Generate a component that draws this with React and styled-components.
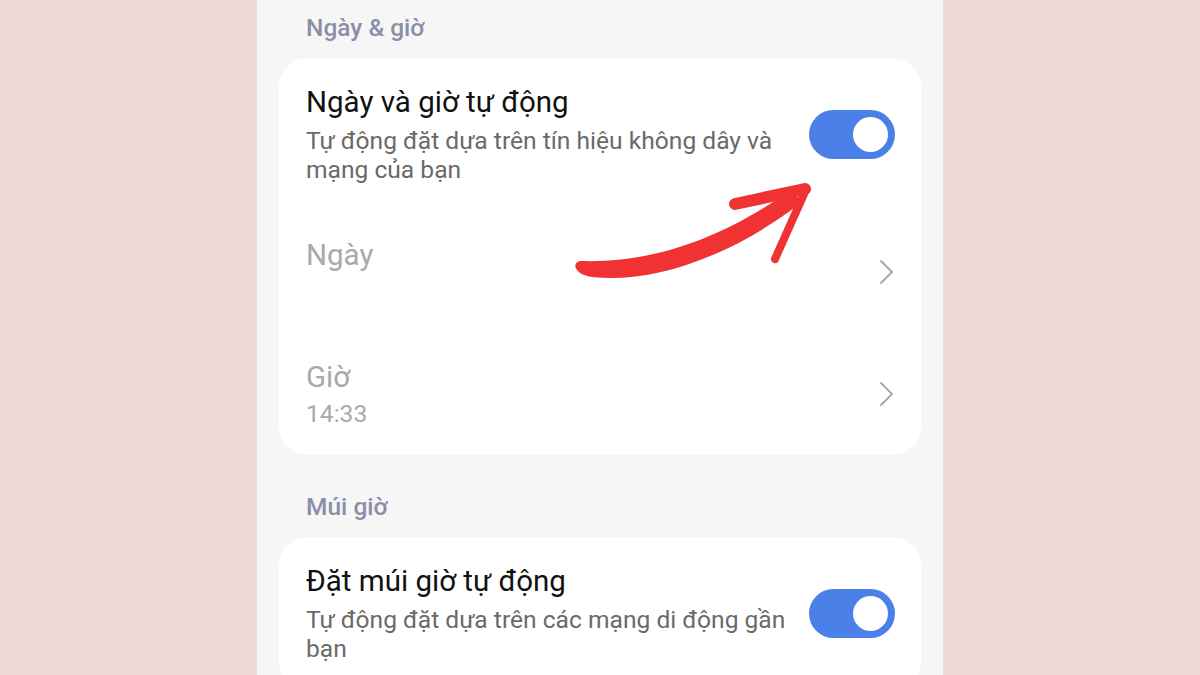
import React from 'react';
import styled, { createGlobalStyle } from 'styled-components';

const GlobalStyle = createGlobalStyle`
  html, body {
    margin: 0;
    padding: 0;
    background: #eed9d9;
    font-family: Roboto, 'Noto Sans', sans-serif;
  }
`;

const Page = styled.div`
  width: 1200px;
  height: 675px;
  overflow: hidden;
  position: relative;
  display: flex;
  justify-content: center;
`;

const Phone = styled.div`
  width: 686px;
  height: 675px;
  background: #f6f6f6;
  padding: 0 22px;
  box-sizing: border-box;
  display: flex;
  flex-direction: column;
  gap: 24px;
`;

const Section = styled.section`
  display: flex;
  flex-direction: column;
`;

const SectionTitle = styled.div`
  padding: 16px 27px 18px;
  font-size: 24.5px;
  line-height: 24px;
  font-weight: 500;
  color: #8a8fa7;
`;

const Card = styled.div`
  background: #ffffff;
  border-radius: 28px;
`;

const Row = styled.div`
  display: flex;
  align-items: center;
  gap: 14px;
  padding: 27px;
  ${p => p.$toggle && 'padding-right: 26px;'}
`;

const Texts = styled.div`
  flex: 1;
  min-width: 0;
`;

const Title = styled.div`
  font-size: 29.5px;
  line-height: 34px;
  color: ${p => (p.$dim ? '#a9a9a9' : '#111111')};
  margin-bottom: ${p => (p.$dim ? '5px' : '7px')};
`;

const Sub = styled.div`
  font-size: 24.6px;
  line-height: 29px;
  color: ${p => (p.$dim ? '#a9a9a9' : '#6a6a6a')};
  min-height: 29px;
`;

const Switch = styled.div`
  width: 86px;
  height: 49px;
  border-radius: 25px;
  background: #4a80e8;
  flex-shrink: 0;
  display: flex;
  align-items: center;
  justify-content: flex-end;
  padding: 0 7px;
  box-sizing: border-box;
`;

const Knob = styled.div`
  width: 35px;
  height: 35px;
  border-radius: 50%;
  background: #ffffff;
`;

const Chevron = () => (
  <svg width="16" height="26" viewBox="0 0 16 26" fill="none">
    <path d="M3 2 L14 13 L3 24" stroke="#a6a6a6" strokeWidth="1.8" strokeLinecap="round" strokeLinejoin="round" />
  </svg>
);

const ArrowLayer = styled.svg`
  position: absolute;
  left: 0;
  top: 0;
  pointer-events: none;
`;

const Arrow = () => (
  <ArrowLayer width="1200" height="675" viewBox="0 0 1200 675">
    <path
      d="M580 261 C640 263 710 247 791 190 L802 202 C730 258 650 284 592 277 C575 275 571 263 580 261 Z"
      fill="#f03232"
    />
    <path d="M735 204 L805 189" stroke="#f03232" strokeWidth="12" strokeLinecap="round" />
    <path d="M804 194 L775 259" stroke="#f03232" strokeWidth="8" strokeLinecap="round" />
  </ArrowLayer>
);

const ToggleRow = ({ title, sub }) => (
  <Row $toggle>
    <Texts>
      <Title>{title}</Title>
      <Sub>{sub}</Sub>
    </Texts>
    <Switch>
      <Knob />
    </Switch>
  </Row>
);

const LinkRow = ({ title, value }) => (
  <Row>
    <Texts>
      <Title $dim>{title}</Title>
      <Sub $dim>{value}</Sub>
    </Texts>
    <Chevron />
  </Row>
);

export default function App() {
  return (
    <Page>
      <GlobalStyle />
      <Phone>
        <Section>
          <SectionTitle>Ngày &amp; giờ</SectionTitle>
          <Card>
            <ToggleRow
              title="Ngày và giờ tự động"
              sub="Tự động đặt dựa trên tín hiệu không dây và mạng của bạn"
            />
            <LinkRow title="Ngày" value="" />
            <LinkRow title="Giờ" value="14:33" />
          </Card>
        </Section>
        <Section>
          <SectionTitle>Múi giờ</SectionTitle>
          <Card>
            <ToggleRow
              title="Đặt múi giờ tự động"
              sub="Tự động đặt dựa trên các mạng di động gần bạn"
            />
          </Card>
        </Section>
      </Phone>
      <Arrow />
    </Page>
  );
}
